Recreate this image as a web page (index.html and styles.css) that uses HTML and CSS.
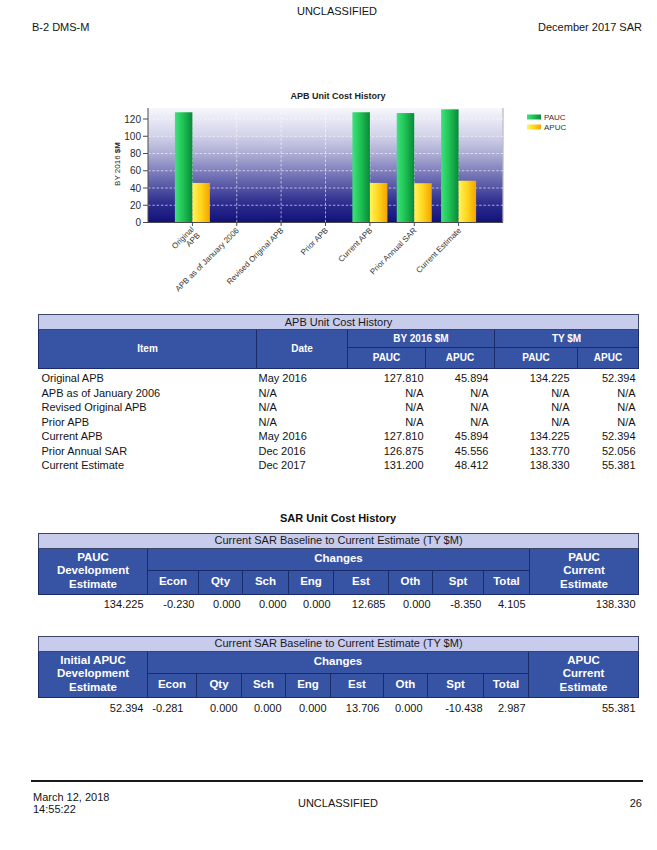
FILE: index.html
```html
<!DOCTYPE html>
<html lang="en">
<head>
<meta charset="utf-8">
<title>B-2 DMS-M December 2017 SAR</title>
<link rel="stylesheet" href="styles.css">
</head>
<body>
<div class="page">
  <div class="classif top-classif">UNCLASSIFIED</div>
  <div class="runhead"><span>B-2 DMS-M</span><span>December 2017 SAR</span></div>

  <svg class="chart" viewBox="0 34 657 280" width="657" height="280" xmlns="http://www.w3.org/2000/svg">
    <defs>
      <linearGradient id="bg" x1="0" y1="0" x2="0" y2="1">
        <stop offset="0" stop-color="#f7f7fc"/>
        <stop offset="0.22" stop-color="#d6d6ec"/>
        <stop offset="0.42" stop-color="#a8a8d2"/>
        <stop offset="0.62" stop-color="#6a6ab2"/>
        <stop offset="0.82" stop-color="#30308f"/>
        <stop offset="1" stop-color="#10107a"/>
      </linearGradient>
      <linearGradient id="gr" x1="0" y1="0" x2="1" y2="0">
        <stop offset="0" stop-color="#3fe27c"/>
        <stop offset="0.45" stop-color="#1fc455"/>
        <stop offset="1" stop-color="#0a883a"/>
      </linearGradient>
      <linearGradient id="yl" x1="0" y1="0" x2="1" y2="0">
        <stop offset="0" stop-color="#fff55c"/>
        <stop offset="0.5" stop-color="#ffd41c"/>
        <stop offset="1" stop-color="#f4a300"/>
      </linearGradient>
    </defs>

    <text class="ctitle" x="338" y="99">APB Unit Cost History</text>

    <rect x="148" y="108" width="355" height="114.5" fill="url(#bg)"/>
    <line class="plotedge" x1="503" y1="108" x2="503" y2="222.5"/>

    <g class="grid">
      <line x1="148" y1="205.25" x2="503" y2="205.25"/>
      <line x1="148" y1="188" x2="503" y2="188"/>
      <line x1="148" y1="170.75" x2="503" y2="170.75"/>
      <line x1="148" y1="153.5" x2="503" y2="153.5"/>
      <line x1="148" y1="136.25" x2="503" y2="136.25"/>
      <line x1="148" y1="119" x2="503" y2="119"/>
      <line x1="192.4" y1="108" x2="192.4" y2="222.5"/>
      <line x1="236.75" y1="108" x2="236.75" y2="222.5"/>
      <line x1="281.1" y1="108" x2="281.1" y2="222.5"/>
      <line x1="325.5" y1="108" x2="325.5" y2="222.5"/>
      <line x1="369.9" y1="108" x2="369.9" y2="222.5"/>
      <line x1="414.25" y1="108" x2="414.25" y2="222.5"/>
      <line x1="458.6" y1="108" x2="458.6" y2="222.5"/>
    </g>

    <g class="bars">
      <rect x="174.9" y="112.26" width="17.5" height="110.24" fill="url(#gr)"/>
      <rect x="192.4" y="182.92" width="17.5" height="39.58" fill="url(#yl)"/>
      <rect x="352.4" y="112.26" width="17.5" height="110.24" fill="url(#gr)"/>
      <rect x="369.9" y="182.92" width="17.5" height="39.58" fill="url(#yl)"/>
      <rect x="396.75" y="113.07" width="17.5" height="109.43" fill="url(#gr)"/>
      <rect x="414.25" y="183.21" width="17.5" height="39.29" fill="url(#yl)"/>
      <rect x="441.1" y="109.34" width="17.5" height="113.16" fill="url(#gr)"/>
      <rect x="458.6" y="180.74" width="17.5" height="41.76" fill="url(#yl)"/>
    </g>

    <g class="axis">
      <line x1="148" y1="108" x2="148" y2="222.5"/>
      <line x1="148" y1="222.5" x2="503" y2="222.5"/>
      <line x1="143" y1="222.5" x2="148" y2="222.5"/>
      <line x1="143" y1="205.25" x2="148" y2="205.25"/>
      <line x1="143" y1="188" x2="148" y2="188"/>
      <line x1="143" y1="170.75" x2="148" y2="170.75"/>
      <line x1="143" y1="153.5" x2="148" y2="153.5"/>
      <line x1="143" y1="136.25" x2="148" y2="136.25"/>
      <line x1="143" y1="119" x2="148" y2="119"/>
      <line x1="192.4" y1="222.5" x2="192.4" y2="226"/>
      <line x1="236.75" y1="222.5" x2="236.75" y2="226"/>
      <line x1="281.1" y1="222.5" x2="281.1" y2="226"/>
      <line x1="325.5" y1="222.5" x2="325.5" y2="226"/>
      <line x1="369.9" y1="222.5" x2="369.9" y2="226"/>
      <line x1="414.25" y1="222.5" x2="414.25" y2="226"/>
      <line x1="458.6" y1="222.5" x2="458.6" y2="226"/>
    </g>

    <g class="ytick">
      <text x="141" y="226">0</text>
      <text x="141" y="208.75">20</text>
      <text x="141" y="191.5">40</text>
      <text x="141" y="174.25">60</text>
      <text x="141" y="157">80</text>
      <text x="141" y="139.75">100</text>
      <text x="141" y="122.5">120</text>
    </g>

    <text class="ytitle" transform="translate(120,164) rotate(-90)">BY 2016 <tspan class="bold">$M</tspan></text>

    <g class="xlab">
      <text transform="translate(194.5,230) rotate(-45)">Original</text>
      <text transform="translate(194.5,230) rotate(-45)" y="8.5">APB</text>
      <text transform="translate(239.5,231) rotate(-45)">APB as of January 2006</text>
      <text transform="translate(284,231) rotate(-45)">Revised Original APB</text>
      <text transform="translate(328.5,231) rotate(-45)">Prior APB</text>
      <text transform="translate(372.9,231) rotate(-45)">Current APB</text>
      <text transform="translate(417.2,231) rotate(-45)">Prior Annual SAR</text>
      <text transform="translate(461.6,231) rotate(-45)">Current Estimate</text>
    </g>

    <g class="legend">
      <rect x="527" y="114.5" width="14" height="5" fill="url(#gr)"/>
      <text x="544" y="120">PAUC</text>
      <rect x="527" y="124.5" width="14" height="5" fill="url(#yl)"/>
      <text x="544" y="130">APUC</text>
    </g>
  </svg>

  <table class="cost t1">
    <colgroup>
      <col class="w218"><col class="w91"><col class="w78"><col class="w69"><col class="w83"><col class="w61">
    </colgroup>
    <thead>
      <tr class="title-row"><td colspan="6">APB Unit Cost History</td></tr>
      <tr class="hrow-a"><th rowspan="2">Item</th><th rowspan="2">Date</th><th colspan="2">BY 2016 $M</th><th colspan="2">TY $M</th></tr>
      <tr class="hrow-b"><th>PAUC</th><th>APUC</th><th>PAUC</th><th>APUC</th></tr>
    </thead>
    <tbody>
      <tr><td>Original APB</td><td>May 2016</td><td>127.810</td><td>45.894</td><td>134.225</td><td>52.394</td></tr>
      <tr><td>APB as of January 2006</td><td>N/A</td><td>N/A</td><td>N/A</td><td>N/A</td><td>N/A</td></tr>
      <tr><td>Revised Original APB</td><td>N/A</td><td>N/A</td><td>N/A</td><td>N/A</td><td>N/A</td></tr>
      <tr><td>Prior APB</td><td>N/A</td><td>N/A</td><td>N/A</td><td>N/A</td><td>N/A</td></tr>
      <tr><td>Current APB</td><td>May 2016</td><td>127.810</td><td>45.894</td><td>134.225</td><td>52.394</td></tr>
      <tr><td>Prior Annual SAR</td><td>Dec 2016</td><td>126.875</td><td>45.556</td><td>133.770</td><td>52.056</td></tr>
      <tr><td>Current Estimate</td><td>Dec 2017</td><td>131.200</td><td>48.412</td><td>138.330</td><td>55.381</td></tr>
    </tbody>
  </table>

  <h2 class="sec-title">SAR Unit Cost History</h2>

  <table class="cost sar t2">
    <colgroup>
      <col class="w109"><col class="w51"><col class="w44"><col class="w46"><col class="w45"><col class="w55"><col class="w44"><col class="w51"><col class="w46"><col class="w109">
    </colgroup>
    <thead>
      <tr class="title-row"><td colspan="10">Current SAR Baseline to Current Estimate (TY $M)</td></tr>
      <tr class="hrow-a"><th rowspan="2">PAUC<br>Development<br>Estimate</th><th colspan="8">Changes</th><th rowspan="2">PAUC<br>Current<br>Estimate</th></tr>
      <tr class="hrow-b"><th>Econ</th><th>Qty</th><th>Sch</th><th>Eng</th><th>Est</th><th>Oth</th><th>Spt</th><th>Total</th></tr>
    </thead>
    <tbody>
      <tr><td>134.225</td><td>-0.230</td><td>0.000</td><td>0.000</td><td>0.000</td><td>12.685</td><td>0.000</td><td>-8.350</td><td>4.105</td><td>138.330</td></tr>
    </tbody>
  </table>

  <table class="cost sar t3">
    <colgroup>
      <col class="w109"><col class="w49"><col class="w45"><col class="w44"><col class="w45"><col class="w53"><col class="w44"><col class="w56"><col class="w45"><col class="w110">
    </colgroup>
    <thead>
      <tr class="title-row"><td colspan="10">Current SAR Baseline to Current Estimate (TY $M)</td></tr>
      <tr class="hrow-a"><th rowspan="2">Initial APUC<br>Development<br>Estimate</th><th colspan="8">Changes</th><th rowspan="2">APUC<br>Current<br>Estimate</th></tr>
      <tr class="hrow-b"><th>Econ</th><th>Qty</th><th>Sch</th><th>Eng</th><th>Est</th><th>Oth</th><th>Spt</th><th>Total</th></tr>
    </thead>
    <tbody>
      <tr><td>52.394</td><td>-0.281</td><td>0.000</td><td>0.000</td><td>0.000</td><td>13.706</td><td>0.000</td><td>-10.438</td><td>2.987</td><td>55.381</td></tr>
    </tbody>
  </table>

  <footer class="pagefoot">
    <div class="stamp">March 12, 2018<br>14:55:22</div>
    <div class="classif">UNCLASSIFIED</div>
    <div class="pgnum">26</div>
  </footer>
</div>
</body>
</html>
```

FILE: styles.css
```css
* { box-sizing: border-box; }
html, body { margin: 0; padding: 0; background: #fff; }
body { font-family: "Liberation Sans", Arial, sans-serif; color: #141414; }

.page {
  width: 657px;
  height: 850px;
  display: flex;
  flex-direction: column;
  overflow: hidden;
}

.classif { font-size: 11px; line-height: 13px; text-align: center; }
.top-classif { margin: 5px 14px 0 31px; }

.runhead {
  display: flex;
  justify-content: space-between;
  font-size: 11px;
  line-height: 13px;
  margin: 3px 15px 0 32px;
}

/* chart */
.chart { display: block; width: 657px; height: 280px; flex: none; }
.chart text { font-family: "Liberation Sans", Arial, sans-serif; fill: #2a2a2a; }
.chart .ctitle { font-size: 9px; font-weight: bold; text-anchor: middle; fill: #222; }
.chart .grid line { stroke: #ffffff; stroke-width: 0.8; stroke-dasharray: 2.5 1.8; opacity: 0.75; }
.chart .axis line { stroke: #4a4a4a; stroke-width: 1; }
.chart .plotedge { stroke: #b8b8c8; stroke-width: 1.2; }
.chart .ytick text { font-size: 10px; text-anchor: end; }
.chart .ytitle { font-size: 8px; text-anchor: middle; }
.chart .bold { font-weight: bold; }
.chart .xlab text { font-size: 8px; text-anchor: end; fill: #333; }
.chart .legend text { font-size: 8px; fill: #333; }

/* tables */
.cost {
  flex: none;
  border-collapse: collapse;
  table-layout: fixed;
  width: 600px;
  margin-left: 38px;
  font-size: 11px;
}
.cost th, .cost td { padding: 0; white-space: nowrap; }

.w218 { width: 218px; } .w91 { width: 91px; } .w78 { width: 78px; } .w69 { width: 69px; }
.w83 { width: 83px; } .w61 { width: 61px; } .w109 { width: 109px; } .w110 { width: 110px; }
.w51 { width: 51px; } .w44 { width: 44px; } .w46 { width: 46px; } .w45 { width: 45px; }
.w55 { width: 55px; } .w49 { width: 49px; } .w53 { width: 53px; } .w56 { width: 56px; }

.title-row td {
  height: 15px;
  line-height: 13px;
  background: #c7cbec;
  border: 1px solid #3c4468;
  text-align: center;
  color: #1a1a1a;
}
.cost th {
  background: #3753a3;
  color: #fff;
  font-weight: bold;
  border: 1px solid #1b2a68;
  text-align: center;
  vertical-align: middle;
}

.t1 th { font-size: 10px; line-height: 12px; }
.t1 .hrow-a { height: 18px; }
.t1 .hrow-b { height: 21px; }
.t1 tbody td { line-height: 14.5px; }
.t1 tbody tr:first-child td { padding-top: 2px; }
.t1 tbody td:nth-child(1) { padding-left: 3px; }
.t1 tbody td:nth-child(2) { padding-left: 2px; }
.t1 tbody td:nth-child(n+3) { text-align: right; }
.t1 tbody td:nth-child(3) { padding-right: 2px; }
.t1 tbody td:nth-child(4) { padding-right: 6px; }
.t1 tbody td:nth-child(5) { padding-right: 8px; }
.t1 tbody td:nth-child(6) { padding-right: 3px; }

.sec-title {
  flex: none;
  margin: 38px 0 8px 38px;
  width: 600px;
  font-size: 11px;
  line-height: 14px;
  font-weight: bold;
  text-align: center;
  color: #111;
}

.sar th { font-size: 11.5px; line-height: 13.5px; }
.sar .hrow-a { height: 22px; }
.sar .hrow-b { height: 24px; }
.sar tbody td { line-height: 14px; text-align: right; padding-right: 3px; }
.t2 tbody td { padding-top: 2px; }
.t2 tbody td:nth-child(1), .t2 tbody td:nth-child(2), .t2 tbody td:nth-child(9) { padding-right: 4px; }
.t2 tbody td:nth-child(3), .t2 tbody td:nth-child(4), .t2 tbody td:nth-child(7), .t2 tbody td:nth-child(8) { padding-right: 2px; }

.t3 { margin-top: 25px; }
.t3 tbody td { padding-top: 3px; padding-right: 4px; }
.t3 tbody td:nth-child(2) { padding-right: 13px; }
.t3 tbody td:nth-child(7) { padding-right: 5px; }
.t3 tbody td:nth-child(8) { padding-right: 1px; }
.t3 tbody td:nth-child(9), .t3 tbody td:nth-child(10) { padding-right: 3px; }

/* footer */
.pagefoot {
  flex: none;
  margin: auto 14px 0 31px;
  border-top: 2px solid #1a1a1a;
  padding: 9px 0 35px 2px;
  display: grid;
  grid-template-columns: 1fr auto 1fr;
  align-items: center;
  font-size: 11px;
  line-height: 12px;
}
.pagefoot .classif { line-height: 12px; }
.pgnum { text-align: right; padding-right: 1px; }
```
